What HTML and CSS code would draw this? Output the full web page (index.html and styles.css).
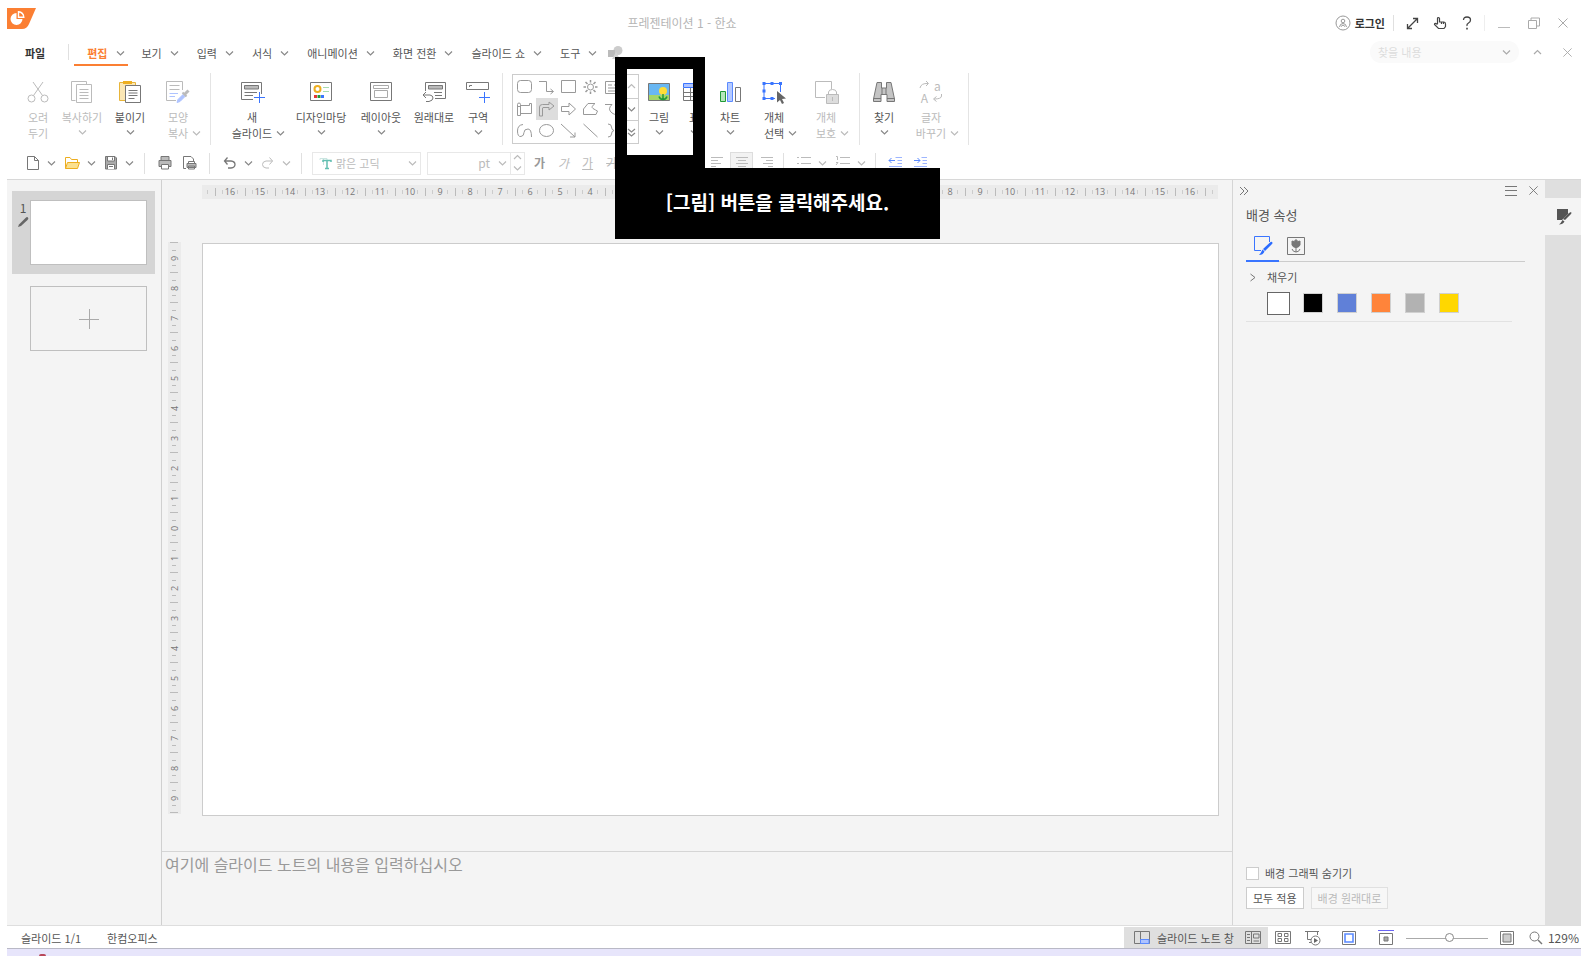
FILE: index.html
```html
<!DOCTYPE html>
<html lang="ko">
<head>
<meta charset="utf-8">
<title>프레젠테이션 1 - 한쇼</title>
<link rel="stylesheet" href="styles.css">
</head>
<body>
<svg class="defs" aria-hidden="true">
  <symbol id="down" viewBox="0 0 9 9"><path d="M1 2.500 4.500 6 8 2.500"/></symbol>
  <symbol id="up" viewBox="0 0 9 9"><path d="M1 6 4.500 2.500 8 6"/></symbol>
  <symbol id="cross" viewBox="0 0 12 12"><path d="M1.500 1.500 10.500 10.500M10.500 1.500 1.500 10.500"/></symbol>
</svg>
<div class="app">
  <header class="titlebar">
    <svg class="logo" viewBox="0 0 29 21"><path d="M0 0H29L22 16Q20 21 15 21H0Z" fill="#fb7f33"/><path d="M9.500 5A6 6 0 1 0 15.500 11H9.500Z" fill="#fff"/><path d="M11.500 3.800A6 6 0 0 1 16.800 9.200H11.500Z" fill="#fb7f33" stroke="#fff" stroke-width="1.400"/></svg>
    <h1 class="doc-title">프레젠테이션 1 - 한쇼</h1>
    <div class="window-tools">
      <button class="login"><svg class="ic" width="16" height="16" viewBox="0 0 16 16"><circle cx="8" cy="8" r="7" stroke="#999"/><circle cx="8" cy="6" r="1.800" stroke="#999"/><path d="M4.500 12Q5 8.500 8 8.500T11.500 12M6 11.500 8 10 10 11.500" stroke="#999"/></svg>로그인</button>
      <span class="rule tall"></span>
      <button class="expand" aria-label="전체 화면"><svg class="ic" width="13" height="13" viewBox="0 0 13 13"><path d="M1.500 11.500 11.500 1.500M7 1.500H11.500V6M1.500 7V11.500H6" stroke="#444" stroke-width="1.300"/></svg></button>
      <button class="hand" aria-label="터치"><svg class="ic" width="14" height="14" viewBox="0 0 14 14"><path d="M4.500 8V2.500Q4.500 1.500 5.500 1.500T6.500 2.500V6H11Q12.500 6 12.500 8V10.500L11 12.500H5.500L1.500 8.500Q1.500 7 3 7.500L4.500 8.500M8.500 6V8M10.500 6.500V8" stroke="#444" stroke-width="1.200"/></svg></button>
      <button class="help" aria-label="도움말"><svg class="ic" width="10" height="14" viewBox="0 0 10 14"><path d="M1.500 4Q1.500 1 5 1T8.500 4Q8.500 6 6.500 7T5 10" stroke="#444" stroke-width="1.300"/><path d="M5 11.800V13.400" stroke="#444" stroke-width="1.600"/></svg></button>
      <span class="rule faint"></span>
      <button class="min" aria-label="최소화"><svg class="ic" width="12" height="12" viewBox="0 0 12 12"><path d="M0 10.500H12" stroke="#bbb"/></svg></button>
      <button class="restore" aria-label="이전 크기로"><svg class="ic" width="12" height="12" viewBox="0 0 12 12"><path d="M.500 3.500H8.500V11.500H.500ZM3 3.500V1H11.500V9H8.500" stroke="#aaa"/></svg></button>
      <button class="close" aria-label="닫기"><svg class="ic gray" width="12" height="12"><use href="#cross"/></svg></button>
    </div>
  </header>

  <nav class="menubar">
    <button class="menu file">파일</button>
    <span class="rule menu-rule"></span>
    <button class="menu active">편집<svg class="caret"><use href="#down"/></svg></button>
    <button class="menu">보기<svg class="caret"><use href="#down"/></svg></button>
    <button class="menu">입력<svg class="caret"><use href="#down"/></svg></button>
    <button class="menu">서식<svg class="caret"><use href="#down"/></svg></button>
    <button class="menu">애니메이션<svg class="caret"><use href="#down"/></svg></button>
    <button class="menu">화면 전환<svg class="caret"><use href="#down"/></svg></button>
    <button class="menu">슬라이드 쇼<svg class="caret"><use href="#down"/></svg></button>
    <button class="menu last">도구<svg class="caret"><use href="#down"/></svg></button>
    <svg class="shapes" width="15" height="13" viewBox="0 0 15 13"><circle cx="10" cy="4.500" r="4.500" fill="#ccc"/><path d="M0 4H7V11H0Z" fill="#bbb"/><path d="M4 13 8 6 12 13Z" fill="#d4d4d4"/></svg>
    <div class="search-tools">
      <label class="search"><input class="search-box" type="text" placeholder="찾을 내용" aria-label="찾을 내용"><svg class="caret"><use href="#down"/></svg></label>
      <button class="collapse" aria-label="접기"><svg class="caret"><use href="#up"/></svg></button>
      <button aria-label="문서 닫기"><svg class="ic gray" width="11" height="11"><use href="#cross"/></svg></button>
    </div>
  </nav>

  <section class="ribbon" aria-label="편집">
    <button class="tool w44 off"><svg class="ic" width="24" height="24" viewBox="0 0 24 24"><circle cx="5.500" cy="18.500" r="3.500"/><circle cx="18.500" cy="18.500" r="3.500"/><path d="M7 2 16.500 15.500M17 2 7.500 15.500"/></svg><span>오려</span><span>두기</span></button>
    <button class="tool w44 off"><svg class="ic" width="24" height="24" viewBox="0 0 24 24"><path d="M5.500 20.500H1.500V1.500H16.500V4M6.500 4.500H21.500V22.500H6.500ZM9.500 9.500H18.500M9.500 12.500H18.500M9.500 15.500H18.500M9.500 18.500H18.500"/></svg><span>복사하기</span><svg class="caret"><use href="#down"/></svg></button>
    <button class="tool w52"><svg class="ic" width="24" height="24" viewBox="0 0 24 24"><path d="M1.500 2.500H17.500V20.500H1.500Z" fill="#fbe7b5" stroke="#e8b53a"/><path d="M5 1H14V4H5Z" fill="#edae20" stroke="none"/><path d="M7.500 5.500H22.500V22.500H7.500Z" fill="#fff"/><path d="M10.500 10.500H19.500M10.500 13H19.500M10.500 15.500H19.500M10.500 18.500H16.500"/></svg><span>붙이기</span><svg class="caret"><use href="#down"/></svg></button>
    <button class="tool w44 off"><svg class="ic" width="24" height="24" viewBox="0 0 24 24"><path d="M10 20.500H.500V1.500H16.500V10M3.500 5.500H13.500M3.500 9.500H13.500"/><path d="M3.500 13.500H12M3.500 16.500H9" stroke="#aec3ff"/><path d="M11 22.500 12 19.500 17 14.500 19 16.500 14 21.500Z" stroke="#aec3ff" fill="#aec3ff"/><path d="M16.500 12.500 20.500 16.500" stroke-width="2"/><path d="M18.500 14.500 22.500 10.500" stroke-width="3"/></svg><span>모양</span><span>복사<svg class="caret hang"><use href="#down"/></svg></span></button>
    <span class="divider g10"></span>
    <button class="tool w60 first"><svg class="ic" width="26" height="24" viewBox="0 0 26 24"><path d="M14 19.500H2.500V2.500H22.500V14M5.500 12.500H18M5.500 15.500H14"/><path d="M5.500 5.500H19.500V9H5.500Z" fill="#bbb"/><path d="M20.500 12V23M15 17.500H26" stroke="#3a75ff"/></svg><span>새</span><span>슬라이드<svg class="caret hang"><use href="#down"/></svg></span></button>
    <button class="tool w70 g4"><svg class="ic" width="24" height="24" viewBox="0 0 24 24"><path d="M1.500 2.500H22.500V20.500H1.500Z"/><circle cx="8.500" cy="9" r="3" stroke="#edae20" stroke-width="2"/><path d="M14 7.500H20M14 11.500H20" stroke="#a8dcae"/><path d="M5 15H8V18H5Z" fill="#e53935" stroke="none"/><path d="M8.500 15H11.500V18H8.500Z" fill="#219a36" stroke="none"/><path d="M12 15H15V18H12Z" fill="#3a75ff" stroke="none"/></svg><span>디자인마당</span><svg class="caret"><use href="#down"/></svg></button>
    <button class="tool w50"><svg class="ic" width="24" height="24" viewBox="0 0 24 24"><path d="M1.500 2.500H22.500V20.500H1.500Z"/><path d="M4.500 5.500H19.500V8.500H4.500ZM5.500 10.500H18.500V17.500H5.500Z" stroke="#aaa"/></svg><span>레이아웃</span><svg class="caret"><use href="#down"/></svg></button>
    <button class="tool w56"><svg class="ic" width="24" height="24" viewBox="0 0 24 24"><path d="M3.500 11V2.500H23.500V18.500H13M12 12.500H20M13 15.500H20"/><path d="M6.500 5.500H20.500V9H6.500Z" fill="#bbb"/><path d="M4 12 1 15 4 18M1 15H8Q11 15.500 11 18T7 21.500H4"/></svg><span>원래대로</span></button>
    <button class="tool w32"><svg class="ic" width="24" height="24" viewBox="0 0 24 24"><path d="M.500 2.500H22.500V9.500H.500Z"/><path d="M3.500 7V5.500H6"/><path d="M18.500 12V23M13 17.500H24" stroke="#3a75ff"/></svg><span>구역</span><svg class="caret"><use href="#down"/></svg></button>
    <span class="divider g8"></span>
    <div class="gallery">
      <div class="gallery-grid">
        <button aria-label="둥근 사각형"><svg class="ic" width="18" height="16" viewBox="0 0 18 16"><rect x="1.500" y="1.500" width="14" height="12" rx="3"/></svg></button>
        <button aria-label="꺾인 연결선"><svg class="ic" width="18" height="16" viewBox="0 0 18 16"><path d="M1 2.500H8.500V12.500H15M12.500 10 15.500 12.500 12.500 15"/></svg></button>
        <button aria-label="사각형"><svg class="ic" width="18" height="16" viewBox="0 0 18 16"><path d="M1.500 1.500H15.500V13.500H1.500Z"/></svg></button>
        <button aria-label="해"><svg class="ic" width="18" height="16" viewBox="0 0 18 16"><circle cx="8.500" cy="8" r="3"/><path d="M8.500 1V3.500M8.500 12.500V15M1.500 8H4M13 8H15.500M3.500 3 5.500 5M11.500 11 13.500 13M13.500 3 11.500 5M5.500 11 3.500 13" stroke-width="1.500"/></svg></button>
        <button aria-label="글상자"><svg class="ic" width="18" height="16" viewBox="0 0 18 16"><path d="M1.500 2.500H15.500V14.500H1.500ZM4 6H8M4 9H13M4 12H13M10 6H13"/></svg></button>
        <button aria-label="두루마리"><svg class="ic" width="18" height="16" viewBox="0 0 18 16"><path d="M4.500 4.500H13.500V2.500H15.500V12.500H4.500M4.500 14.500H1.500V3.500Q1.500 2 3 2T4.500 3.500ZM1.500 5.500H4.500"/></svg></button>
        <button class="picked" aria-label="굽은 화살표"><svg class="ic" width="18" height="16" viewBox="0 0 18 16"><path d="M1.500 15V6Q1.500 3.500 4.500 3.500H11V1L16 5 11 9V6.500H5Q4.500 6.500 4.500 8V15Z"/></svg></button>
        <button aria-label="오른쪽 화살표"><svg class="ic" width="18" height="16" viewBox="0 0 18 16"><path d="M1.500 5.500H9V2L15.500 8 9 14V10.500H1.500Z"/></svg></button>
        <button aria-label="자유형"><svg class="ic" width="18" height="16" viewBox="0 0 18 16"><path d="M1.500 13.500V8L6 2.500H13Q8.500 6 11 7.500T15.500 10L14 13.500Z"/></svg></button>
        <button aria-label="곡선 연결선"><svg class="ic" width="18" height="16" viewBox="0 0 18 16"><path d="M1 3.500H8Q3 8 8 12T15 8"/></svg></button>
        <button aria-label="곡선"><svg class="ic" width="18" height="16" viewBox="0 0 18 16"><path d="M7 1.500Q1.500 2 1.500 8T5 13.500Q8 13 8 9.500T12 6Q15.500 6 15.500 14"/></svg></button>
        <button aria-label="타원"><svg class="ic" width="18" height="16" viewBox="0 0 18 16"><ellipse cx="8.500" cy="7.500" rx="7" ry="6"/></svg></button>
        <button aria-label="화살표 선"><svg class="ic" width="18" height="16" viewBox="0 0 18 16"><path d="M1 1 15 14M15 9.500V14H10"/></svg></button>
        <button aria-label="직선"><svg class="ic" width="18" height="16" viewBox="0 0 18 16"><path d="M1.500 1 15.500 14"/></svg></button>
        <button aria-label="중괄호"><svg class="ic" width="18" height="16" viewBox="0 0 18 16"><path d="M4 1Q7.500 1 7.500 4T10 7.500Q7.500 8 7.500 11T4 14"/></svg></button>
      </div>
      <div class="gallery-scroll">
        <button class="off" aria-label="위로"><svg class="caret"><use href="#up"/></svg></button>
        <button aria-label="아래로"><svg class="caret"><use href="#down"/></svg></button>
        <button aria-label="자세히"><svg class="caret" viewBox="0 0 9 9"><path d="M1 1 4.500 4 8 1M1 5 4.500 8 8 5"/></svg></button>
      </div>
    </div>
    <button class="tool w36 g2"><svg class="ic" width="24" height="24" viewBox="0 0 24 24"><path d="M1.500 3.500H22.500V20.500H1.500Z" fill="#69b7f2"/><path d="M2 15H22V20H2Z" fill="#a6d568" stroke="none"/><circle cx="16" cy="11" r="4" fill="#ffdd35" stroke="none"/><path d="M16 14V20M12 16.500Q13 19.500 16 19.500T20 16.500" stroke="#219a36" stroke-width="1.500"/></svg><span>그림</span><svg class="caret"><use href="#down"/></svg></button>
    <button class="tool w34"><svg class="ic" width="24" height="24" viewBox="0 0 24 24"><path d="M1.500 8V20.500H22.500V8M8.500 8V20.500M15.500 8V20.500M1.500 12.500H22.500M1.500 16.500H22.500"/><path d="M1.500 3.500H22.500V7.500H1.500Z" fill="#aec3ff" stroke="#3a75ff"/></svg><span>표</span><svg class="caret"><use href="#down"/></svg></button>
    <button class="tool w38"><svg class="ic" width="24" height="24" viewBox="0 0 24 24"><path d="M2.500 11.500H7.500V21.500H2.500Z" fill="#b6e5bb" stroke="#219a36"/><path d="M9.500 2.500H14.500V21.500H9.500Z" fill="#b5caff" stroke="#5b8aff"/><path d="M17.500 7.500H22.500V21.500H17.500Z"/></svg><span>차트</span><svg class="caret"><use href="#down"/></svg></button>
    <button class="tool w50"><svg class="ic" width="26" height="24" viewBox="0 0 26 24"><path d="M3 3.500H19.500V12M3 3.500V18.500H14" stroke="#3a75ff"/><path d="M1.500 2H4.500V5H1.500ZM9.500 2H12.500V5H9.500ZM18 2H21V5H18ZM1.500 9.500H4.500V12.500H1.500ZM1.500 17H4.500V20H1.500ZM9.500 17H12.500V20H9.500Z" fill="#3a75ff" stroke="none"/><path d="M16 11 25 18.500 21 19 23 23 21 24 19 20 16 22.500Z" fill="#666" stroke="none"/></svg><span>개체</span><span>선택<svg class="caret hang"><use href="#down"/></svg></span></button>
    <button class="tool w50 off g2"><svg class="ic" width="26" height="24" viewBox="0 0 26 24"><path d="M12 17.500H2.500V1.500H18.500V9"/><path d="M13.500 14.500H25.500V23.500H13.500Z" fill="#ddd"/><path d="M15.500 14V12Q16 9.500 19.500 9.500T23.500 12V14M19.500 17V21"/></svg><span>개체</span><span>보호<svg class="caret hang"><use href="#down"/></svg></span></button>
    <span class="divider g8"></span>
    <button class="tool w36 g6"><svg class="ic" width="24" height="24" viewBox="0 0 24 24"><path d="M5 2.500H9.500V8H14.500V2.500H19L22.500 19V21.500H15V14.500H9V21.500H1.500V19Z" fill="#c4c4c4"/><path d="M1.500 18.500H9M15 18.500H22.500M10 8V14M14 8V14"/></svg><span>찾기</span><svg class="caret"><use href="#down"/></svg></button>
    <button class="tool w58 off"><span class="swap"><svg class="ic" width="11" height="11" viewBox="0 0 11 11"><path d="M1 8Q2 3 9 3.500M7 1 9.500 3.500 7 6"/></svg><b>a</b><b>A</b><svg class="ic" width="11" height="11" viewBox="0 0 11 11"><path d="M9.500 2V4Q9.500 7 2 7M4.500 4.500 1.500 7 4.500 9.500"/></svg></span><span>글자</span><span>바꾸기<svg class="caret hang"><use href="#down"/></svg></span></button>
    <span class="divider g8"></span>
  </section>

  <section class="toolbar" aria-label="서식 도구">
    <button class="pair"><svg class="ic" width="14" height="16" viewBox="0 0 14 16"><path d="M1.500 1.500H8.500L12.500 5.500V14.500H1.500ZM8.500 1.500V5.500H12.500"/></svg><svg class="caret"><use href="#down"/></svg></button>
    <button class="pair"><svg class="ic" width="16" height="16" viewBox="0 0 16 16"><path d="M1.500 13.500V2.500H6L7.500 4.500H13.500V7" stroke="#edae20"/><path d="M3.500 7.500H15.500L13.500 13.500H1.500Z" fill="#fbe08f" stroke="#edae20"/></svg><svg class="caret"><use href="#down"/></svg></button>
    <button class="pair"><svg class="ic" width="14" height="16" viewBox="0 0 14 16"><path d="M1.500 1.500H11L12.500 3V14H1.500Z" fill="#aaa"/><path d="M3.500 2V6H10.500V2M3.500 14V9.500H10.500V14" fill="#fff"/><path d="M8.500 2.500V5M5 11.500H9"/></svg><svg class="caret"><use href="#down"/></svg></button>
    <span class="rule tb"></span>
    <button aria-label="인쇄"><svg class="ic" width="14" height="16" viewBox="0 0 14 16"><path d="M3 5V1.500H11V5M1 5.500H13V11.500H1Z" fill="#bbb"/><path d="M3.500 9.500H10.500V14H3.500Z" fill="#fff"/></svg></button>
    <button aria-label="미리 보기"><svg class="ic" width="15" height="16" viewBox="0 0 15 16"><path d="M4 13.500H1.500V1.500H9L11.500 4V6"/><path d="M5 8.500H14V12.500H5Z" fill="#bbb"/><path d="M6.500 8V6.500H12.500V8M6.500 11H12.500V14H6.500Z"/></svg></button>
    <span class="rule tb"></span>
    <button class="pair"><svg class="ic" width="14" height="14" viewBox="0 0 14 14"><path d="M4.500 1.500 1.500 5 4.500 8.500M1.500 5H8Q12 5.500 12 8.500T8 12H5" stroke-width="1.300"/></svg><svg class="caret"><use href="#down"/></svg></button>
    <button class="pair off"><svg class="ic" width="14" height="14" viewBox="0 0 14 14"><path d="M8.500 1.500 11.500 5 8.500 8.500M11.500 5H5Q1.500 5.500 1.500 8.500T5 12H8"/></svg><svg class="caret"><use href="#down"/></svg></button>
    <span class="rule tb"></span>
    <button class="combo off"><svg class="ic" width="13" height="14" viewBox="0 0 13 14"><path d="M1 4V2.500H8V4M4.500 2.500V9" stroke="#cbe5e1"/><path d="M4 6V4.500H12V6M8 4.500V12.500M6 12.500H10" stroke="#63bfb1" stroke-width="1.500"/></svg><span class="combo-text">맑은 고딕</span><svg class="caret"><use href="#down"/></svg></button>
    <div class="size off"><button class="size-box">pt<svg class="caret"><use href="#down"/></svg></button><span class="spin"><svg class="caret"><use href="#up"/></svg><svg class="caret"><use href="#down"/></svg></span></div>
    <div class="glyphs"><button class="dark">가</button><button class="ital">가</button><button class="under">가</button><button class="strike">가</button></div>
    <div class="aligns off">
      <button aria-label="왼쪽 정렬"><svg class="ic" width="14" height="14" viewBox="0 0 14 14"><path d="M1 1.500H13M1 4.500H8M1 7.500H11M1 10.500H6"/></svg></button>
      <button class="chosen" aria-label="가운데 정렬"><svg class="ic" width="14" height="14" viewBox="0 0 14 14"><path d="M1 1.500H13M3 4.500H11M1 7.500H13M3 10.500H11"/></svg></button>
      <button aria-label="오른쪽 정렬"><svg class="ic" width="14" height="14" viewBox="0 0 14 14"><path d="M1 1.500H13M6 4.500H13M3 7.500H13M8 10.500H13"/></svg></button>
      <span class="rule tb"></span>
      <button class="pair"><svg class="ic" width="15" height="14" viewBox="0 0 15 14"><path d="M5 1.500H15M5 7.500H15M1 1.500H3M1 7.500H3"/></svg><svg class="caret"><use href="#down"/></svg></button>
      <button class="pair"><svg class="ic" width="15" height="14" viewBox="0 0 15 14"><path d="M5 1.500H15M5 7.500H15M1 .500H2.500V4M1 6.500H3L1 9"/></svg><svg class="caret"><use href="#down"/></svg></button>
      <span class="rule tb tight"></span>
      <button aria-label="내어쓰기"><svg class="ic" width="14" height="14" viewBox="0 0 14 14"><path d="M7.500 1.500H14M9.500 4.500H14M9.500 7.500H14M1 10.500H14" stroke="#9db5ff"/><path d="M1 4.500H7M3.500 2 1 4.500 3.500 7" stroke="#5b8aff"/></svg></button>
      <button aria-label="들여쓰기"><svg class="ic" width="14" height="14" viewBox="0 0 14 14"><path d="M8.500 1.500H14M9.500 4.500H14M9.500 7.500H14M1 10.500H14" stroke="#9db5ff"/><path d="M1 4.500H7M4.500 2 7 4.500 4.500 7" stroke="#5b8aff"/></svg></button>
    </div>
  </section>

  <main class="main">
    <aside class="slides">
      <div class="slide-item selected"><div class="slide-info"><span>1</span><svg width="12" height="12" viewBox="0 0 12 12"><path d="M1 11 2 8.500 8.500 2Q10 .500 11 1.500T10.500 4L4 10Z" fill="#666"/></svg></div><div class="thumb"></div></div>
      <div class="slide-item"><div class="slide-info"></div><button class="thumb add" aria-label="슬라이드 추가"><svg class="ic" width="20" height="20" viewBox="0 0 20 20"><path d="M10.500 0V20M0 10.500H20" stroke="#aaa"/></svg></button></div>
    </aside>
    <section class="editor">
      <div class="stage">
        <div class="ruler horizontal"></div>
        <div class="ruler vertical"></div>
        <div class="canvas"></div>
      </div>
      <div class="notes">여기에 슬라이드 노트의 내용을 입력하십시오</div>
    </section>
    <aside class="props">
      <div class="props-head"><button aria-label="접기"><svg class="ic" width="10" height="10" viewBox="0 0 10 10"><path d="M1 1 5 5 1 9M5 1 9 5 5 9"/></svg></button><span class="grow"></span><button aria-label="메뉴"><svg class="ic" width="12" height="12" viewBox="0 0 12 12"><path d="M0 1.500H12M0 5.500H12M0 10.500H12"/></svg></button><button aria-label="닫기"><svg class="ic" width="11" height="11"><use href="#cross"/></svg></button></div>
      <h2 class="props-title">배경 속성</h2>
      <div class="tabs">
        <button class="tab on" aria-label="채우기"><svg class="ic" width="20" height="20" viewBox="0 0 20 20"><path d="M8 15.500H1.500V1.500H16.500V7" stroke="#3a75ff"/><path d="M19 7Q20 8 19 9L12 16 10 14 17 7.500Q18 6.500 19 7ZM9.500 14.500 11.500 16.500Q10 20 6 20 8 18 9.500 14.500Z" fill="#2a6bff" stroke="none"/></svg></button>
        <button class="tab" aria-label="그림"><svg class="ic" width="20" height="20" viewBox="0 0 20 20"><path d="M1.500 1.500H18.500V18.500H1.500Z"/><path d="M6 5 8 5.500 10 3.500 12 5.500 14 5V9Q13 11.500 10 11.500T6 9Z" fill="#777"/><path d="M10 11V16M6 13Q7 16 10 16T14 13"/></svg></button>
      </div>
      <button class="fold"><svg class="ic" width="8" height="9" viewBox="0 0 8 9"><path d="M1.500 1 6 4.500 1.500 8"/></svg>채우기</button>
      <div class="swatches"><button class="sw white" aria-label="흰색"></button><button class="sw black" aria-label="검정"></button><button class="sw blue" aria-label="파랑"></button><button class="sw orange" aria-label="주황"></button><button class="sw silver" aria-label="회색"></button><button class="sw yellow" aria-label="노랑"></button></div>
      <div class="props-foot">
        <label class="check"><input type="checkbox">배경 그래픽 숨기기</label>
        <div class="actions"><button class="btn">모두 적용</button><button class="btn" disabled>배경 원래대로</button></div>
      </div>
    </aside>
    <div class="strip"><button class="strip-tab" aria-label="배경 속성"><svg width="16" height="17" viewBox="0 0 16 17"><path d="M1 1H12V6L6 12H1Z" fill="#555"/><path d="M15 4Q16 5 15 6L9 12 7 11 13 5ZM6.500 12 8.500 13.500Q7 16.500 3 16.500 5 15 6.500 12Z" fill="#555"/></svg></button></div>
  </main>

  <footer class="status">
    <span class="count">슬라이드 1/1</span><span>한컴오피스</span>
    <span class="grow"></span>
    <div class="views">
      <button class="note-toggle"><svg class="ic" width="16" height="14" viewBox="0 0 16 14"><path d="M.500.500H15.500V12.500H.500ZM6.500.500V12.500"/><path d="M6.500 8.500H15V12.500H6.500Z" fill="#aec3ff" stroke="#5b8aff"/></svg>슬라이드 노트 창</button>
      <button aria-label="기본 보기"><svg class="ic" width="16" height="14" viewBox="0 0 16 14"><path d="M.500.500H15.500V12.500H.500ZM6.500.500V12.500M8.500 3H14V7H8.500ZM8.500 10H14M2 3.500H5M2 6.500H5M2 9.500H5"/></svg></button>
    </div>
    <button class="v1" aria-label="여러 슬라이드"><svg class="ic" width="16" height="14" viewBox="0 0 16 14"><path d="M.500.500H15.500V12.500H.500Z"/><path d="M3 2.500H6.500V5.500H3ZM9.500 2.500H13V5.500H9.500ZM3 7.500H6.500V10.500H3ZM9.500 7.500H13V10.500H9.500Z"/></svg></button>
    <button class="v2" aria-label="슬라이드 쇼"><svg class="ic" width="16" height="16" viewBox="0 0 16 16"><path d="M0 1.500H14M2.500 1.500V9.500H6M12.500 1.500V5M4 12.500H6"/><circle cx="10.500" cy="10.500" r="4.500" fill="#fff"/><path d="M9 8V13L13 10.500Z" fill="#666" stroke="none"/></svg></button>
    <button class="v3" aria-label="창에 맞추기"><svg class="ic" width="14" height="14" viewBox="0 0 14 14"><path d="M.500.500H13.500V13.500H.500Z"/><path d="M3 3H11V11H3Z" stroke="#5b8aff" stroke-width="1.600"/></svg></button>
    <button class="v4" aria-label="축소"><svg class="ic" width="16" height="16" viewBox="0 0 16 16"><path d="M0 .500H16" stroke="#6a65f5"/><path d="M1.500 3.500H14.500V14.500H1.500Z"/><path d="M6 7H10V11H6Z" fill="#aaa"/></svg></button>
    <input class="zoom" type="range" min="0" max="100" value="54" aria-label="확대/축소">
    <button aria-label="확대"><svg class="ic" width="14" height="14" viewBox="0 0 14 14"><path d="M.500.500H13.500V13.500H.500Z"/><path d="M3 3H11V11H3Z" fill="#ccc"/></svg></button>
    <button class="zoom-value"><svg class="ic" width="14" height="14" viewBox="0 0 14 14"><circle cx="5.500" cy="5.500" r="4.500"/><path d="M9 9 13 13" stroke-width="1.500"/></svg>129%</button>
  </footer>
  <div class="taskbar"><span class="dot"></span></div>

  <div class="callout" role="dialog" aria-label="안내">
    <div class="spotlight"></div>
    <p class="message">[그림] 버튼을 클릭해주세요.</p>
  </div>
</div>
<script src="script.js"></script>
</body>
</html>
```

FILE: styles.css
```css
* { box-sizing: border-box; }

body {
  margin: 0;
  height: 100vh;
  padding: 8px 9px 7px 7px;
  background: #fff;
  color: #555;
  font: 11px/16px "Noto Sans CJK KR", "Open Sans", sans-serif;
  overflow: hidden;
}

.defs { position: absolute; width: 0; height: 0; }

button {
  margin: 0;
  padding: 0;
  border: 0;
  background: none;
  color: inherit;
  font: inherit;
  white-space: nowrap;
  display: inline-flex;
  align-items: center;
}

h1, h2, p { margin: 0; font-weight: 400; }

svg { display: block; flex: none; }
.ic { fill: none; stroke: #777; stroke-width: 1; }
.ic.gray { stroke: #aaa; }
.caret { width: 9px; height: 9px; fill: none; stroke: #888; stroke-width: 1.2; }
.off { color: #bbb; }
.off .ic, .off .caret { stroke: #bbb; }
.grow { flex: 1; }
.rule { width: 1px; background: #e0e0e0; flex: none; }

.app {
  position: relative;
  height: 100%;
  display: flex;
  flex-direction: column;
}

/* title bar */
.titlebar {
  display: grid;
  grid-template-columns: 1fr auto 1fr;
  height: 30px;
  align-items: center;
}
.logo { width: 29px; height: 21px; align-self: start; }
.doc-title { color: #b5b5b5; font-size: 12px; padding-right: 224px; }
.window-tools { display: flex; justify-content: flex-end; align-items: center; padding-right: 12px; }
.login { gap: 4px; color: #333; font-weight: 700; }
.tall { height: 16px; margin: 0 12px 0 8px; }
.hand { margin-left: 14px; }
.help { margin-left: 15px; }
.faint { height: 16px; margin: 0 13px 0 12px; background: #eee; }
.restore { margin-left: 18px; }
.close { margin-left: 17px; }

/* menu bar */
.menubar { display: flex; align-items: center; height: 28px; padding-left: 18px; }
.menu { height: 26px; margin-right: 18px; gap: 8px; padding-top: 2px; }
.menu.file { color: #333; font-weight: 700; margin-right: 23px; }
.menu-rule { height: 16px; margin-right: 5px; }
.menu.active {
  align-self: flex-end;
  color: #fb7f33;
  font-weight: 700;
  padding: 2px 3px 0 13px;
  margin-right: 14px;
  border-bottom: 2px solid #fb7f33;
}
.menu.last { margin-right: 11px; }
.search-tools { margin-left: auto; display: flex; align-items: center; padding-right: 8px; }
.search-tools .caret { stroke: #aaa; }
.search {
  display: flex;
  align-items: center;
  width: 149px;
  height: 22px;
  padding: 0 8px;
  border-radius: 11px;
  background: #fafafa;
}
.search-box { flex: 1; min-width: 0; border: 0; padding: 0; background: none; font: inherit; }
.search-box::placeholder { color: #ddd; opacity: 1; }
.collapse { margin: 0 20px 0 14px; }

/* ribbon */
.ribbon { display: flex; align-items: flex-start; height: 82px; padding: 14px 0 0 9px; }
.tool { flex-direction: column; height: 66px; }
.tool > .caret { margin-top: 3px; }
.tool > .ic, .swap { margin-bottom: 5px; }
.tool > .ic { height: 24px; }
.hang { display: inline-block; margin-left: 4px; margin-right: -13px; }
.w32 { width: 32px; }
.w34 { width: 34px; }
.w36 { width: 36px; }
.w38 { width: 38px; }
.w44 { width: 44px; }
.w50 { width: 50px; }
.w52 { width: 52px; }
.w56 { width: 56px; }
.w58 { width: 58px; }
.w60 { width: 60px; }
.w70 { width: 70px; }
.g2 { margin-left: 2px; }
.g4 { margin-left: 4px; }
.g6 { margin-left: 6px; }
.g8 { margin-left: 8px; }
.g10 { margin-left: 10px; }
.first { margin-left: 11px; }
.divider { width: 1px; height: 72px; margin-top: -7px; background: #e4e4e4; flex: none; }
.swap { display: grid; grid-template-columns: 11px 11px; gap: 0 2px; height: 24px; line-height: 12px; font-size: 12px; text-align: center; }
.swap b { font-weight: 400; }
.gallery { display: flex; width: 127px; height: 70px; margin: -6px 0 0 9px; border: 1px solid #ccc; }
.gallery-grid { flex: 1; display: grid; grid-template-columns: repeat(5, 22px); grid-auto-rows: 22px; padding: 1px; overflow: hidden; }
.gallery-grid button { justify-content: center; }
.gallery-grid .ic { stroke: #999; }
.picked { background: #ddd; }
.gallery-scroll { display: grid; grid-template-rows: repeat(3, 1fr); width: 14px; background: #fff; border-left: 1px solid #ccc; }
.gallery-scroll button { justify-content: center; }
.gallery-scroll button + button { border-top: 1px solid #ccc; }

/* quick toolbar */
.toolbar { display: flex; align-items: center; height: 31px; padding: 0 0 1px 19px; }
.toolbar .pair { gap: 7px; margin-right: 8px; }
.tb { height: 21px; margin: 0 13px 0 2px; }
.toolbar > button:not(.pair):not(.combo) { margin-right: 10px; }
.combo { width: 109px; height: 23px; margin: 0 6px 0 -3px; padding: 0 3px 0 6px; gap: 4px; border: 1px solid #e8e8e8; }
.combo-text { flex: 1; text-align: left; }
.size { display: flex; width: 98px; height: 23px; border: 1px solid #e8e8e8; }
.size-box { flex: 1; justify-content: flex-end; gap: 8px; padding-right: 3px; font-size: 12px; }
.spin { display: flex; flex-direction: column; justify-content: space-around; width: 14px; padding-left: 2px; border-left: 1px solid #e8e8e8; }
.glyphs { display: flex; gap: 13px; margin-left: 9px; color: #bbb; font-size: 12px; width: 171px; }
.dark { color: #999; font-weight: 700; }
.ital { font-style: italic; }
.under { text-decoration: underline; }
.strike { text-decoration: line-through; }
.aligns { display: flex; align-items: center; }
.aligns > button:not(.pair) { height: 22px; width: 23px; justify-content: center; margin-right: 2px; }
.aligns .tb { margin: 0 12px 0 3px; }
.aligns .tight { margin: 0 7px 0 1px; }
.chosen { background: #f2f2f2; outline: 1px solid #ddd; outline-offset: -1px; }

/* workspace */
.main { flex: 1; min-height: 0; display: flex; background: #f4f4f4; border-top: 1px solid #d8d8d8; border-bottom: 1px solid #dedede; }
.slides { width: 155px; flex: none; border-right: 1px solid #d0d0d0; padding: 11px 6px 0 5px; }
.slide-item { display: flex; padding: 9px 8px 9px 4px; margin-bottom: 3px; }
.selected { background: #d5d5d5; }
.slide-info { width: 14px; flex: none; font-size: 12px; display: flex; flex-direction: column; align-items: center; }
.thumb { flex: 1; height: 65px; border: 1px solid #bfbfbf; background: #fff; }
.add { background: none; justify-content: center; }

.editor { flex: 1; min-width: 0; display: flex; flex-direction: column; }
.stage {
  flex: 1;
  min-height: 0;
  display: grid;
  grid-template: 14px 1fr / 13px 1fr;
  gap: 44px 21px;
  padding: 5px 13px 35px 6px;
}
.ruler { display: flex; justify-content: center; overflow: hidden; background: #ebebeb; color: #777; font: 9px/14px "Open Sans", sans-serif; }
.horizontal { grid-column: 2; margin-right: 1px; }
.vertical { flex-direction: column; margin-top: -1px; margin-bottom: 2px; }
.mark { flex: 0 0 30px; text-align: center; }
.horizontal .mark {
  background:
    linear-gradient(#ccc, #ccc) 7px 5px / 1px 4px no-repeat,
    linear-gradient(#ccc, #ccc) 22px 5px / 1px 4px no-repeat,
    linear-gradient(#bbb, #bbb) 0 3px / 1px 8px no-repeat;
}
.vertical .mark {
  writing-mode: vertical-rl;
  transform: rotate(180deg);
  line-height: 13px;
  background:
    linear-gradient(#bbb, #bbb) 5px 7px / 4px 1px no-repeat,
    linear-gradient(#bbb, #bbb) 5px 22px / 4px 1px no-repeat,
    linear-gradient(#bbb, #bbb) 3px 0 / 8px 1px no-repeat;
}
.canvas { background: #fff; border: 1px solid #ccc; }
.notes { height: 74px; padding: 1px 3px; border-top: 1px solid #d5d5d5; color: #999; font-size: 16px; line-height: 22px; }

/* property panel */
.props { width: 313px; flex: none; display: flex; flex-direction: column; border-left: 1px solid #d5d5d5; padding: 0 20px 16px 13px; }
.props-head { display: flex; align-items: center; height: 21px; margin: 0 -14px 0 -7px; gap: 11px; }
.props-title { font-size: 13px; line-height: 20px; margin-top: 4px; }
.tabs { display: flex; border-bottom: 1px solid #ccc; margin-top: 4px; }
.tab { width: 33px; height: 33px; justify-content: center; margin-bottom: -1px; }
.tab.on { border-bottom: 2px solid #3a75ff; }
.fold { gap: 10px; margin: 6px 0 0 3px; height: 18px; }
.swatches { display: flex; align-items: center; gap: 14px; height: 36px; padding: 0 0 1px 21px; margin-right: 13px; border-bottom: 1px solid #e2e2e2; }
.sw { width: 20px; height: 20px; border: 1px solid #d0d0d0; }
.sw.white { width: 23px; height: 23px; background: #fff; border-color: #666; margin-right: -1px; }
.black { background: #000; }
.blue { background: #6080d8; }
.orange { background: #ff843a; }
.silver { background: #b2b2b2; }
.yellow { background: #ffd700; }
.props-foot { margin-top: auto; }
.check { display: flex; align-items: center; gap: 6px; }
.check input { appearance: none; width: 13px; height: 13px; margin: 0; background: #fff; border: 1px solid #ccc; }
.actions { display: flex; gap: 7px; margin-top: 6px; }
.btn { height: 22px; padding: 0 6px; background: #fff; border: 1px solid #ccc; }
.btn:disabled { color: #bbb; background: #f7f7f7; border-color: #e0e0e0; }
.strip { width: 36px; flex: none; background: #dfdfdf; padding-top: 18px; }
.strip-tab { width: 100%; height: 37px; padding-left: 11px; background: #f4f4f4; }

/* status bar */
.status { display: flex; align-items: center; height: 22px; flex: none; padding: 1px 2px 0 14px; }
.count { margin-right: 26px; }
.views { display: flex; align-items: center; height: 22px; padding: 0 7px 0 10px; gap: 11px; background: #dfdfdf; }
.note-toggle { gap: 7px; }
.v1 { margin-left: 7px; }
.v2 { margin-left: 14px; }
.v3 { margin-left: 21px; }
.v4 { margin-left: 22px; }
.zoom { appearance: none; width: 82px; height: 10px; margin: 0 12px 0 12px; background: linear-gradient(#aaa, #aaa) 0 5px / 100% 1px no-repeat; }
.zoom::-webkit-slider-thumb { appearance: none; width: 9px; height: 9px; border: 1px solid #888; border-radius: 50%; background: #fff; }
.zoom-value { margin-left: 15px; gap: 5px; font-size: 12px; }
.taskbar { height: 8px; flex: none; border-top: 1px solid #b9b9c6; background: #e7e5fb; display: flex; align-items: flex-end; padding-left: 32px; }
.dot { width: 7px; height: 2px; background: #b8485a; border-radius: 3px 3px 0 0; }

/* guide shown above the ribbon */
.callout { position: absolute; left: 608px; top: 49px; width: 325px; }
.spotlight { width: 90px; height: 111px; border: 12px solid #000; border-bottom-width: 13px; }
.message { background: #000; color: #fff; font-size: 19px; font-weight: 700; line-height: 68px; height: 71px; text-align: center; }
```

FILE: script.js
```js
// Fills a ruler with one mark per centimetre, counted outwards from the middle.
// Marks from hideFrom to hideTo keep their ticks but carry no number.
function fillRuler(selector, last, hideFrom, hideTo) {
  const ruler = document.querySelector(selector);
  for (let i = -last - 1; i <= last + 1; i++) {
    const mark = document.createElement('span');
    const blank = Math.abs(i) > last || (i >= hideFrom && i <= hideTo);
    mark.className = 'mark';
    mark.textContent = blank ? '' : Math.abs(i);
    ruler.append(mark);
  }
}

// The guide box lies over the middle of the horizontal ruler.
fillRuler('.horizontal', 16, -3, 7);
fillRuler('.vertical', 9);
```
